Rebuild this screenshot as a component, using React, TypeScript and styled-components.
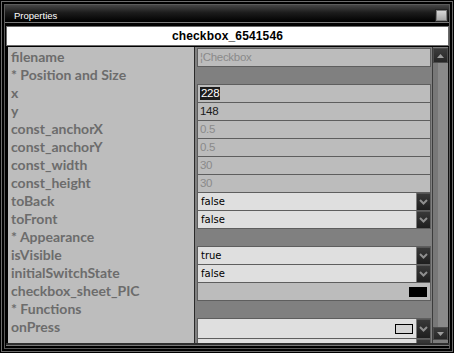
import React from "react";
import styled, { createGlobalStyle } from "styled-components";

const GlobalStyle = createGlobalStyle`
  html, body {
    margin: 0;
    padding: 0;
    background: #000;
  }
  * {
    box-sizing: border-box;
  }
`;

type Row = {
  label: string;
  kind: "section" | "text" | "select" | "color";
  value?: string;
  muted?: boolean;
  selected?: boolean;
  swatch?: string;
  tall?: boolean;
};

const rows: Row[] = [
  { label: "filename", kind: "text", value: "¦Checkbox", muted: true },
  { label: "* Position and Size", kind: "section" },
  { label: "x", kind: "text", value: "228", selected: true },
  { label: "y", kind: "text", value: "148" },
  { label: "const_anchorX", kind: "text", value: "0.5", muted: true },
  { label: "const_anchorY", kind: "text", value: "0.5", muted: true },
  { label: "const_width", kind: "text", value: "30", muted: true },
  { label: "const_height", kind: "text", value: "30", muted: true },
  { label: "toBack", kind: "select", value: "false" },
  { label: "toFront", kind: "select", value: "false" },
  { label: "* Appearance", kind: "section" },
  { label: "isVisible", kind: "select", value: "true" },
  { label: "initialSwitchState", kind: "select", value: "false" },
  { label: "checkbox_sheet_PIC", kind: "color", swatch: "#000" },
  { label: "* Functions", kind: "section" },
  { label: "onPress", kind: "select", value: "", swatch: "#d4d4d4", tall: true },
  { label: "", kind: "select", value: "" },
];

const Chevron = () => (
  <svg width="9" height="6" viewBox="0 0 9 6">
    <polyline points="1,1 4.5,4.5 8,1" fill="none" stroke="#8e8e8e" strokeWidth="2" />
  </svg>
);

const Arrow = ({ up }: { up?: boolean }) => (
  <svg width="7" height="4" viewBox="0 0 7 4">
    <polygon points={up ? "0,4 7,4 3.5,0" : "0,0 7,0 3.5,4"} fill="#9c9c9c" />
  </svg>
);

const App: React.FC = () => {
  return (
    <>
      <GlobalStyle />
      <Outer>
        <Ring>
          <Panel>
            <TitleBar>
              <Title>Properties</Title>
              <CloseBox />
            </TitleBar>
            <Content>
              <NameBox>checkbox_6541546</NameBox>
              <Grid>
                <Table>
                  {rows.map((row, i) => (
                    <RowLine key={i} tall={row.tall}>
                      <Label>{row.label}</Label>
                      <ValueCell>
                        {row.kind === "text" && (
                          <Field tall={row.tall}>
                            <FieldText muted={row.muted} selected={row.selected}>
                              {row.value}
                            </FieldText>
                          </Field>
                        )}
                        {row.kind === "color" && (
                          <Field>
                            <Spacer />
                            <Swatch color={row.swatch!} />
                          </Field>
                        )}
                        {row.kind === "select" && (
                          <SelectBox tall={row.tall}>
                            <SelectText>{row.value}</SelectText>
                            {row.swatch && <SmallSwatch color={row.swatch} />}
                            <DropButton>
                              <Chevron />
                            </DropButton>
                          </SelectBox>
                        )}
                      </ValueCell>
                    </RowLine>
                  ))}
                </Table>
                <ScrollBar>
                  <ScrollUp>
                    <Arrow up />
                  </ScrollUp>
                  <Track />
                  <ScrollDown>
                    <Arrow />
                  </ScrollDown>
                </ScrollBar>
              </Grid>
            </Content>
          </Panel>
        </Ring>
      </Outer>
    </>
  );
};

export default App;

const Outer = styled.div`
  width: 454px;
  height: 353px;
  background: #000;
  padding: 1px;
`;

const Ring = styled.div`
  height: 100%;
  border: 1px solid #6c6c6c;
  padding: 2px;
`;

const Panel = styled.div`
  height: 100%;
  border: 1px solid #5a5a5a;
  display: flex;
  flex-direction: column;
`;

const TitleBar = styled.div`
  height: 18px;
  display: flex;
  align-items: center;
  justify-content: space-between;
  padding: 1px 2px 0 9px;
  background: linear-gradient(to bottom, #454545 0%, #1c1c1c 45%, #000 100%);
  border-bottom: 1px solid #7a7a7a;
`;

const Title = styled.span`
  color: #fff;
  font-family: "Liberation Sans", Arial, sans-serif;
  font-size: 9.5px;
  padding-top: 2px;
`;

const CloseBox = styled.div`
  width: 11px;
  height: 11px;
  margin-top: 3px;
  background: linear-gradient(to bottom, #d6d6d6, #a8a8a8);
  border: 1px solid #7c7c7c;
  box-shadow: 0 0 0 1px #222;
`;

const Content = styled.div`
  flex: 1;
  display: flex;
  flex-direction: column;
  padding: 3px 0 1px 1px;
  gap: 1px;
  min-height: 0;
`;

const NameBox = styled.div`
  height: 20px;
  background: #fff;
  border: 1px solid #6a6a6a;
  display: flex;
  align-items: center;
  justify-content: center;
  color: #000;
  font-family: "Liberation Sans", Arial, sans-serif;
  font-weight: 700;
  font-size: 12px;
  letter-spacing: 0.15px;
`;

const Grid = styled.div`
  flex: 1;
  min-height: 0;
  display: flex;
  padding-left: 2px;
  border-bottom: 2px solid #2e2e2e;
  box-shadow: 0 1px 0 #777;
  margin-bottom: 2px;
`;

const Table = styled.div`
  flex: 1;
  overflow: hidden;
  padding-top: 1px;
  background: linear-gradient(
    to right,
    #bdbdbd 0 186px,
    #2a2a2a 186px 187px,
    #808080 187px
  );
`;

const RowLine = styled.div<{ tall?: boolean }>`
  height: ${(p) => (p.tall ? 20 : 18)}px;
  display: flex;
`;

const Label = styled.div`
  width: 187px;
  padding-left: 3px;
  color: #6c6c6c;
  font-family: Lato, "Open Sans", sans-serif;
  font-weight: 700;
  font-size: 14px;
  line-height: 18px;
  white-space: nowrap;
`;

const ValueCell = styled.div`
  flex: 1;
  padding: 0 1px 0 2px;
`;

const Field = styled.div<{ tall?: boolean }>`
  height: ${(p) => (p.tall ? 21 : 19)}px;
  background: #bcbcbc;
  border: 1px solid #5e5e5e;
  display: flex;
  align-items: center;
  padding: 0 3px 0 2px;
`;

const FieldText = styled.span<{ muted?: boolean; selected?: boolean }>`
  font-family: "Liberation Sans", Arial, sans-serif;
  font-size: 11.5px;
  letter-spacing: -0.3px;
  line-height: 13px;
  color: ${(p) => (p.selected ? "#fff" : p.muted ? "#8a8a8a" : "#1a1a1a")};
  background: ${(p) => (p.selected ? "#1c1c1c" : "transparent")};
  padding: ${(p) => (p.selected ? "0 1px" : "0")};
`;

const Spacer = styled.div`
  flex: 1;
`;

const Swatch = styled.div<{ color: string }>`
  width: 18px;
  height: 10px;
  background: ${(p) => p.color};
`;

const SelectBox = styled.div<{ tall?: boolean }>`
  height: ${(p) => (p.tall ? 21 : 19)}px;
  background: #dfdfdf;
  border: 1px solid #5e5e5e;
  display: flex;
  align-items: center;
  padding-left: 3px;
`;

const SelectText = styled.span`
  flex: 1;
  font-family: "DejaVu Sans", sans-serif;
  font-size: 10px;
  color: #000;
`;

const SmallSwatch = styled.div<{ color: string }>`
  width: 18px;
  height: 10px;
  background: ${(p) => p.color};
  border: 1px solid #000;
  margin-right: 3px;
`;

const DropButton = styled.div`
  width: 14px;
  height: 100%;
  display: flex;
  align-items: center;
  justify-content: center;
  background: linear-gradient(to bottom, #3a3a3a, #1e1e1e);
  border-left: 1px solid #7a7a7a;
  box-shadow: inset 0 1px 0 #555;
`;

const ScrollBar = styled.div`
  width: 17px;
  display: flex;
  flex-direction: column;
  background: #7c7c7c;
  border-left: 1px solid #3c3c3c;
  border-right: 1px solid #111;
`;

const ScrollButton = styled.div`
  display: flex;
  align-items: center;
  justify-content: center;
  background: linear-gradient(to bottom, #3c3c3c, #262626);
  border: 1px solid #4c4c4c;
`;

const ScrollUp = styled(ScrollButton)`
  height: 15px;
  margin-top: 1px;
`;

const ScrollDown = styled(ScrollButton)`
  height: 13px;
  margin-bottom: 3px;
`;

const Track = styled.div`
  flex: 1;
  background: linear-gradient(to right, #787878 0 5px, #8a8a8a 5px);
`;
